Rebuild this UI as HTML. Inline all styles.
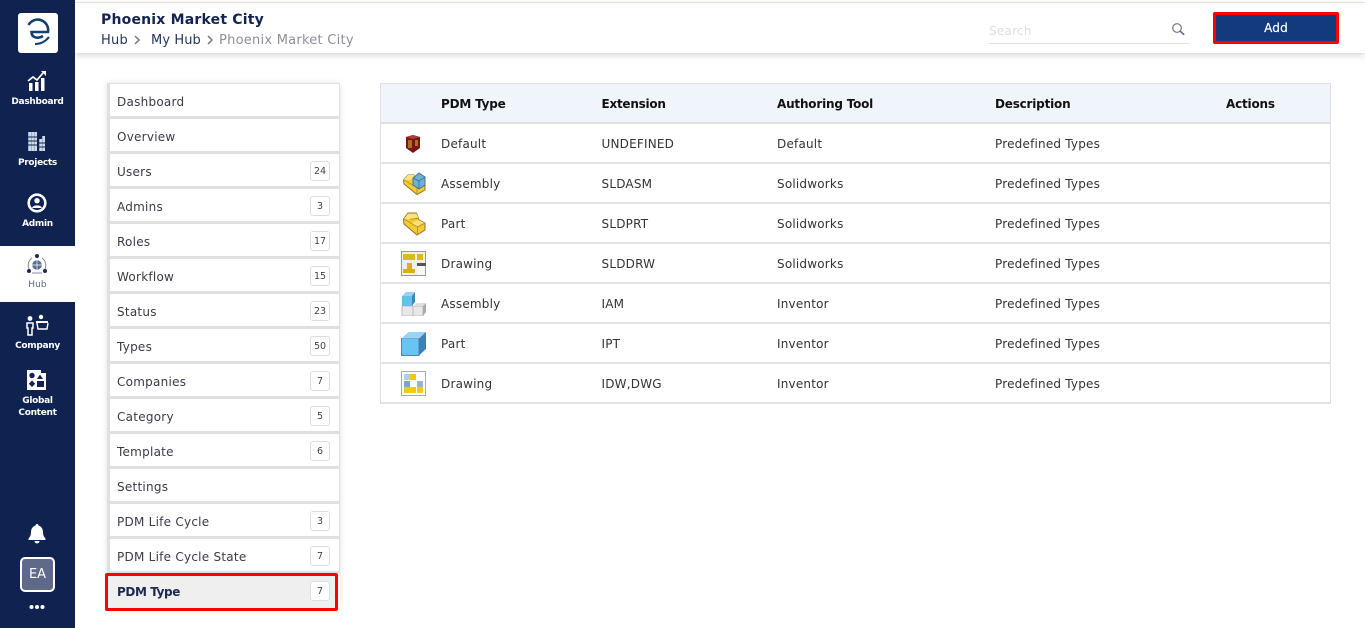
<!DOCTYPE html>
<html><head><meta charset="utf-8"><style>
*{box-sizing:border-box}
html,body{margin:0;padding:0;width:1365px;height:628px;overflow:hidden;background:#fff}
body{font-family:"DejaVu Sans","Liberation Sans",sans-serif;color:#333;position:relative}
.a{position:absolute;white-space:nowrap}
.side{left:0;top:0;width:75px;height:628px;background:#0f2250}
.nl{left:0;width:75px;text-align:center;color:#fff;font-size:9px;font-weight:bold;line-height:12px;letter-spacing:-.3px;margin-top:1px}
.li{left:107px;width:233px;height:35px;border:1px solid #e0e0e0;border-left:3px solid #e0e0e0;border-bottom:2px solid #e0e0e0;background:#fff}
.lt{left:117px;font-size:12px;line-height:18px;color:#3a3a4a;letter-spacing:.25px;margin-top:1px}
.bd{left:310px;width:20px;height:20px;border:1px solid #ddd;border-radius:3px;font-size:9.5px;line-height:20px;text-align:center;color:#444;background:#fff}
.tr{left:380px;width:951px;height:40px;border-left:1px solid #e0e0e0;border-right:1px solid #e0e0e0;border-bottom:2px solid #e0e3e8;background:#fff}
.td{font-size:12px;line-height:18px;color:#333;letter-spacing:.2px;margin-top:1px}
.th{font-size:12px;line-height:18px;color:#111;font-weight:bold;letter-spacing:-.2px;margin-top:1px}
</style></head><body>
<div class="a" style="left:75px;top:0;width:1290px;height:3px;background:#fff;border-bottom:1px solid #fde3d6"></div>
<div class="a" style="left:75px;top:3px;width:1290px;height:50px;background:#fff;box-shadow:0 2px 6px rgba(0,0,0,.18)"></div>
<div class="a" style="left:101px;top:10px;font-size:14px;line-height:20px;font-weight:bold;color:#14234f;letter-spacing:.2px">Phoenix Market City</div>
<div class="a" style="left:101px;top:32px;font-size:13px;line-height:18px;color:#26365e;letter-spacing:.25px">Hub</div>
<svg class="a" style="left:133px;top:35px" width="8" height="10"><path d="M2 1l4 4-4 4" fill="none" stroke="#777" stroke-width="1.5"/></svg>
<div class="a" style="left:151px;top:32px;font-size:13px;line-height:18px;color:#26365e;letter-spacing:.1px">My Hub</div>
<svg class="a" style="left:206px;top:35px" width="8" height="10"><path d="M2 1l4 4-4 4" fill="none" stroke="#777" stroke-width="1.5"/></svg>
<div class="a" style="left:219px;top:32px;font-size:13px;line-height:18px;color:#8b8f98;letter-spacing:.25px">Phoenix Market City</div>
<div class="a" style="left:989px;top:22px;font-size:12px;line-height:18px;color:#dedede;letter-spacing:.25px">Search</div>
<div class="a" style="left:989px;top:43px;width:200px;height:1px;background:#ddd"></div>
<svg class="a" style="left:1171px;top:22px" width="15" height="15"><circle cx="6" cy="6" r="4.300" fill="none" stroke="#777" stroke-width="1.200"/><path d="M9.200 9.200l4 3.600" stroke="#668" stroke-width="1.600"/></svg>
<div class="a" style="left:1213px;top:12px;width:126px;height:32px;background:#123a7c;border:3px solid #f00;border-radius:2px;color:#fff;text-align:center;font-size:12px;line-height:27px;letter-spacing:.2px;-webkit-text-stroke:.2px #fff">Add</div>

<div class="a side"></div>
<div class="a" style="left:18px;top:13px;width:40px;height:40px;background:#fff;border-radius:3px"></div>
<svg class="a" style="left:18px;top:13px" width="40" height="40" viewBox="0 0 40 40"><path d="M10.500 12A10.500 10.500 0 0 1 30 19H13.500C13.500 25 20 26 25 23" fill="none" stroke="#14406f" stroke-width="2.600"/><path d="M17 31C22 31 27 29 31 24" fill="none" stroke="#14406f" stroke-width="2.200"/></svg>
<svg class="a" style="left:27px;top:70px" width="20" height="22" viewBox="0 0 20 22"><path d="M1 11l5-4 4 3 6-7" fill="none" stroke="#fff" stroke-width="1.700"/><path d="M14 1h5v5z" fill="#fff"/><path d="M2 13h3.500v8H2zM8 12h3.500v9H8zM14 8h3.500v13H14z" fill="#fff"/></svg>
<div class="a nl" style="top:95px">Dashboard</div>
<svg class="a" style="left:27px;top:131px" width="20" height="21" viewBox="0 0 20 21"><path d="M1 1h9v19H1zM12 8h3V5h3v15h-6z" fill="#9fb3cc"/><path d="M3 1v19M6 1v19M9 1v19M14 8v12M17 5v15" stroke="#fff" stroke-width="1"/><path d="M1 6h9M1 10h9M1 14h9M12 12h6M12 16h6" stroke="#0f2250" stroke-width="1"/></svg>
<div class="a nl" style="top:156px">Projects</div>
<svg class="a" style="left:26px;top:192px" width="22" height="22" viewBox="0 0 22 22"><circle cx="11" cy="11" r="8.300" fill="none" stroke="#fff" stroke-width="2.600"/><circle cx="11" cy="8.700" r="2.700" fill="#fff"/><path d="M6 16c1-3.500 9-3.500 10 0z" fill="#fff"/></svg>
<div class="a nl" style="top:217px">Admin</div>
<div class="a" style="left:0;top:246px;width:75px;height:56px;background:#fff"></div>
<svg class="a" style="left:26px;top:253px" width="22" height="22" viewBox="0 0 22 22"><path d="M6 5a9 9 0 0 0-3 11M16 5a9 9 0 0 1 3 11M6 20h10" fill="none" stroke="#889" stroke-width="1"/><circle cx="11" cy="12" r="4.800" fill="#5b6a92"/><path d="M6 12h10M11 7v10" stroke="#fff" stroke-width=".7"/><circle cx="11" cy="3" r="2" fill="#1a2a55"/><circle cx="3" cy="18" r="2" fill="#1a2a55"/><circle cx="19" cy="18" r="2" fill="#1a2a55"/></svg>
<div class="a nl" style="top:278px;color:#5c6785;font-weight:normal;letter-spacing:.1px">Hub</div>
<svg class="a" style="left:25px;top:314px" width="24" height="22" viewBox="0 0 24 22"><circle cx="5" cy="4.500" r="2.400" fill="#fff"/><path d="M2 9h6v5H7v7H3v-7H2z" fill="none" stroke="#fff" stroke-width="1.500"/><circle cx="16" cy="3" r="2.200" fill="#fff"/><path d="M11 7h12v2H11z" fill="#fff"/><path d="M12 9l1 6h9l1-6" fill="none" stroke="#fff" stroke-width="1.400"/></svg>
<div class="a nl" style="top:339px">Company</div>
<svg class="a" style="left:26px;top:369px" width="22" height="22" viewBox="0 0 22 22"><path d="M1 1h14v3h5v17H1z" fill="#fff"/><circle cx="6" cy="6.500" r="2.700" fill="#0f2250"/><path d="M6 11.500l3.200 3.200L6 18l-3.200-3.300z" fill="#0f2250"/><path d="M14 5.500l3 4.500h-6z" fill="#0f2250"/><path d="M11 12h7v6h-7z" fill="#0f2250"/></svg>
<div class="a nl" style="top:394px">Global<br>Content</div>
<svg class="a" style="left:28px;top:523px" width="18" height="21" viewBox="0 0 18 21"><path d="M9 1c1 0 1.500.7 1.500 1.500C13.500 3.500 15 6 15 9c0 3 1 5 2.500 6.500V17H.5v-1.500C2 14 3 12 3 9c0-3 1.500-5.500 4.500-6.500C7.500 1.700 8 1 9 1zM6.500 18h5a2.500 2.500 0 0 1-5 0z" fill="#fff"/></svg>
<div class="a" style="left:20px;top:557px;width:35px;height:35px;border:2px solid #fff;border-radius:5px;background:#5f6a8b;color:#fff;font-size:13px;line-height:32px;text-align:center">EA</div>
<svg class="a" style="left:29px;top:604px" width="16" height="6"><circle cx="2.500" cy="3" r="2" fill="#fff"/><circle cx="8" cy="3" r="2" fill="#fff"/><circle cx="13.500" cy="3" r="2" fill="#fff"/></svg>

<div class="a" style="left:107px;top:83px;width:233px;height:526px;box-shadow:0 0 6px rgba(0,0,0,.12)"></div>
<div class="a li" style="top:83px"></div><div class="a lt" style="top:92px">Dashboard</div>
<div class="a li" style="top:118px"></div><div class="a lt" style="top:127px">Overview</div>
<div class="a li" style="top:153px"></div><div class="a lt" style="top:162px">Users</div><div class="a bd" style="top:161px">24</div>
<div class="a li" style="top:188px"></div><div class="a lt" style="top:197px">Admins</div><div class="a bd" style="top:196px">3</div>
<div class="a li" style="top:223px"></div><div class="a lt" style="top:232px">Roles</div><div class="a bd" style="top:231px">17</div>
<div class="a li" style="top:258px"></div><div class="a lt" style="top:267px">Workflow</div><div class="a bd" style="top:266px">15</div>
<div class="a li" style="top:293px"></div><div class="a lt" style="top:302px">Status</div><div class="a bd" style="top:301px">23</div>
<div class="a li" style="top:328px"></div><div class="a lt" style="top:337px">Types</div><div class="a bd" style="top:336px">50</div>
<div class="a li" style="top:363px"></div><div class="a lt" style="top:372px">Companies</div><div class="a bd" style="top:371px">7</div>
<div class="a li" style="top:398px"></div><div class="a lt" style="top:407px">Category</div><div class="a bd" style="top:406px">5</div>
<div class="a li" style="top:433px"></div><div class="a lt" style="top:442px">Template</div><div class="a bd" style="top:441px">6</div>
<div class="a li" style="top:468px"></div><div class="a lt" style="top:477px">Settings</div>
<div class="a li" style="top:503px"></div><div class="a lt" style="top:512px">PDM Life Cycle</div><div class="a bd" style="top:511px">3</div>
<div class="a li" style="top:538px"></div><div class="a lt" style="top:547px">PDM Life Cycle State</div><div class="a bd" style="top:546px">7</div>
<div class="a" style="left:105px;top:573px;width:233px;height:38px;background:#efefef;border:3px solid #f00;border-radius:2px"></div>
<div class="a lt" style="top:582px;font-weight:bold;color:#1c2a50;letter-spacing:-.4px">PDM Type</div><div class="a bd" style="top:581px">7</div>

<div class="a" style="left:380px;top:83px;width:951px;height:41px;background:#f0f5fc;border:1px solid #e0e0e0;border-bottom:2px solid #e0e0e0"></div>
<div class="a th" style="left:441px;top:94px">PDM Type</div><div class="a th" style="left:601.500px;top:94px;letter-spacing:-.25px">Extension</div><div class="a th" style="left:777px;top:94px">Authoring Tool</div><div class="a th" style="left:995px;top:94px">Description</div><div class="a th" style="left:1226px;top:94px">Actions</div>

<div class="a tr" style="top:124px"></div>
<div class="a td" style="left:441px;top:134px">Default</div><div class="a td" style="left:601.500px;top:134px">UNDEFINED</div><div class="a td" style="left:777px;top:134px">Default</div><div class="a td" style="left:995px;top:134px">Predefined Types</div>
<div class="a tr" style="top:164px"></div>
<div class="a td" style="left:441px;top:174px">Assembly</div><div class="a td" style="left:601.500px;top:174px">SLDASM</div><div class="a td" style="left:777px;top:174px">Solidworks</div><div class="a td" style="left:995px;top:174px">Predefined Types</div>
<div class="a tr" style="top:204px"></div>
<div class="a td" style="left:441px;top:214px">Part</div><div class="a td" style="left:601.500px;top:214px">SLDPRT</div><div class="a td" style="left:777px;top:214px">Solidworks</div><div class="a td" style="left:995px;top:214px">Predefined Types</div>
<div class="a tr" style="top:244px"></div>
<div class="a td" style="left:441px;top:254px">Drawing</div><div class="a td" style="left:601.500px;top:254px">SLDDRW</div><div class="a td" style="left:777px;top:254px">Solidworks</div><div class="a td" style="left:995px;top:254px">Predefined Types</div>
<div class="a tr" style="top:284px"></div>
<div class="a td" style="left:441px;top:294px">Assembly</div><div class="a td" style="left:601.500px;top:294px">IAM</div><div class="a td" style="left:777px;top:294px">Inventor</div><div class="a td" style="left:995px;top:294px">Predefined Types</div>
<div class="a tr" style="top:324px"></div>
<div class="a td" style="left:441px;top:334px">Part</div><div class="a td" style="left:601.500px;top:334px">IPT</div><div class="a td" style="left:777px;top:334px">Inventor</div><div class="a td" style="left:995px;top:334px">Predefined Types</div>
<div class="a tr" style="top:364px"></div>
<div class="a td" style="left:441px;top:374px">Drawing</div><div class="a td" style="left:601.500px;top:374px">IDW,DWG</div><div class="a td" style="left:777px;top:374px">Inventor</div><div class="a td" style="left:995px;top:374px">Predefined Types</div>

<svg class="a" style="left:405px;top:134px" width="16" height="20" viewBox="0 0 16 20"><path d="M1 3l7-2 7 2v11l-7 5-7-5z" fill="#7a1512"/><path d="M3 6h4v8H3zM10 6h3v6h-3z" fill="#a8702a"/><path d="M1 3l7-2 7 2-7 2z" fill="#a5423a"/></svg>
<svg class="a" style="left:403px;top:172px" width="23" height="24" viewBox="0 0 23 24"><path d="M.5 8L5 3h6v5l5 3 6 0v7l-8 4.500L1 12z" fill="#f5cb2f" stroke="#8a7430" stroke-width="1"/><path d="M5 3h6v4L6 8 .5 8z" fill="#fbe27a"/><path d="M1 8l13 7.500V22M14 15.500l8-3" fill="none" stroke="#b8962a"/><path d="M10 6l6-5 6 4v8l-6 4-6-4z" fill="#6fb0d6" stroke="#4a6f86" stroke-width="1"/><path d="M10 6l6 3 6-4M16 9v8" fill="none" stroke="#3d7da3"/></svg>
<svg class="a" style="left:403px;top:212px" width="23" height="24" viewBox="0 0 23 24"><path d="M.5 7L5 1h8.500L16 8l6 3v7l-8 5L1 12z" fill="#f5cb2f" stroke="#8a7430" stroke-width="1"/><path d="M5 1.500h8.500L15.500 6 7 7.500 1 7zM9 11l6.500-3 6 3-7 4z" fill="#fbe27a"/><path d="M1 7l13.500 8V23M14.500 15l7.500-4M7 7.500L15.500 6" fill="none" stroke="#b8962a"/></svg>
<svg class="a" style="left:401px;top:251px" width="25" height="25" viewBox="0 0 25 25"><rect x=".5" y=".5" width="24" height="24" fill="#eee" stroke="#999"/><rect x="2" y="3" width="12" height="6" fill="#e0b914"/><rect x="16" y="3" width="6" height="6" fill="#e0b914"/><path d="M6 12h5v6h3v4H2v-4h4z" fill="#d9b112"/><rect x="16" y="12" width="9" height="3" fill="#555"/><rect x="16" y="15" width="8" height="9" fill="#f8f8f8"/></svg>
<svg class="a" style="left:401px;top:291px" width="25" height="25" viewBox="0 0 25 25"><path d="M1 15h11v10H1zM12 15h10v10H12z" fill="#e8e8e8" stroke="#bbb"/><path d="M22 15l3-3v9l-3 4z" fill="#aaa"/><path d="M12 15l4-3h9l-3 3z" fill="#ddd"/><rect x="1" y="5" width="10" height="10" fill="#66c0ee"/><path d="M1 5l4-4h9l-3 4z" fill="#9ad2f4"/><path d="M11 5l3-4v10l-3 4z" fill="#3f85b8"/></svg>
<svg class="a" style="left:401px;top:331px" width="25" height="25" viewBox="0 0 25 25"><path d="M.5 7.500h17.500v17H.5z" fill="#68c4f2" stroke="#4a86ad"/><path d="M.5 7.500L7.500 1h17.500l-7 6.500z" fill="#99d3f6"/><path d="M18 7.500L25 1v17l-7 6.500z" fill="#3f80b4"/></svg>
<svg class="a" style="left:401px;top:371px" width="25" height="25" viewBox="0 0 25 25"><rect x=".5" y=".5" width="24" height="24" fill="#fff" stroke="#aaa"/><rect x="3" y="3" width="6" height="6" fill="#b4cde4"/><rect x="9" y="3" width="6" height="6" fill="#f5c913"/><rect x="3" y="10" width="6" height="6" fill="#7ea5c8"/><rect x="16" y="10" width="6" height="6" fill="#95b5d2"/><rect x="3" y="16" width="6" height="6" fill="#f5c913"/><rect x="9" y="16" width="6" height="6" fill="#f5c913"/><rect x="16" y="16" width="6" height="6" fill="#f5c913"/></svg>
</body></html>
